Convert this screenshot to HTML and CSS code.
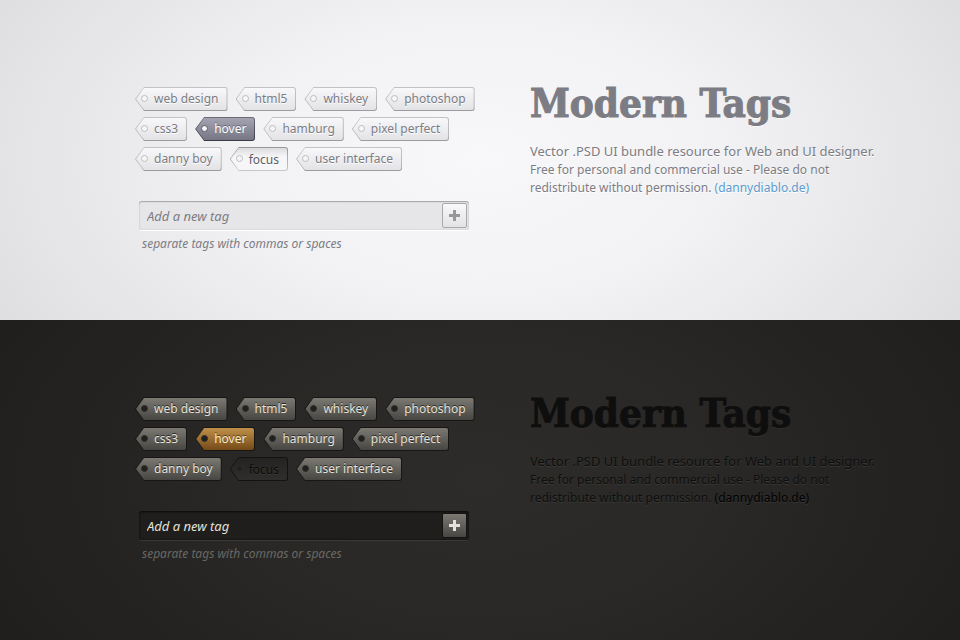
FILE: index.html
```html
<!DOCTYPE html>
<html lang="en">
<head>
    <meta charset="UTF-8">
    <title>Modern Tags</title>
    <meta name="viewport" content="width=device-width, initial-scale=1.0">
    <link rel="stylesheet" href="styles.css">
</head>
<body>
    <section class="panel light">
        <div class="widget">
            <ul class="tags">
                <li><a href="#" class="tag">web design</a></li>
                <li><a href="#" class="tag">html5</a></li>
                <li><a href="#" class="tag">whiskey</a></li>
                <li><a href="#" class="tag">photoshop</a></li>
                <li><a href="#" class="tag">css3</a></li>
                <li><a href="#" class="tag is-hover">hover</a></li>
                <li><a href="#" class="tag">hamburg</a></li>
                <li><a href="#" class="tag">pixel perfect</a></li>
                <li><a href="#" class="tag">danny boy</a></li>
                <li><a href="#" class="tag is-focus">focus</a></li>
                <li><a href="#" class="tag">user interface</a></li>
            </ul>
            <form class="add-form">
                <div class="add-box">
                    <input type="text" id="tag-light" class="add-input" placeholder="Add a new tag">
                    <button type="button" class="add-btn" aria-label="Add tag">
                        <svg width="11" height="11" viewBox="0 0 11 11"><path d="M4 0h3v4h4v3H7v4H4V7H0V4h4z"/></svg>
                    </button>
                </div>
                <label for="tag-light" class="hint">separate tags with commas or spaces</label>
            </form>
        </div>
        <div class="about">
            <h1>Modern Tags</h1>
            <p class="lead">Vector .PSD UI bundle resource for Web and UI designer.</p>
            <p>Free for personal and commercial use - Please do not<br>redistribute without permission. <a href="#">(dannydiablo.de)</a></p>
        </div>
    </section>

    <section class="panel dark">
        <div class="widget">
            <ul class="tags">
                <li><a href="#" class="tag">web design</a></li>
                <li><a href="#" class="tag">html5</a></li>
                <li><a href="#" class="tag">whiskey</a></li>
                <li><a href="#" class="tag">photoshop</a></li>
                <li><a href="#" class="tag">css3</a></li>
                <li><a href="#" class="tag is-hover">hover</a></li>
                <li><a href="#" class="tag">hamburg</a></li>
                <li><a href="#" class="tag">pixel perfect</a></li>
                <li><a href="#" class="tag">danny boy</a></li>
                <li><a href="#" class="tag is-focus">focus</a></li>
                <li><a href="#" class="tag">user interface</a></li>
            </ul>
            <form class="add-form">
                <div class="add-box">
                    <input type="text" id="tag-dark" class="add-input" placeholder="Add a new tag">
                    <button type="button" class="add-btn" aria-label="Add tag">
                        <svg width="11" height="11" viewBox="0 0 11 11"><path d="M4 0h3v4h4v3H7v4H4V7H0V4h4z"/></svg>
                    </button>
                </div>
                <label for="tag-dark" class="hint">separate tags with commas or spaces</label>
            </form>
        </div>
        <div class="about">
            <h1>Modern Tags</h1>
            <p class="lead">Vector .PSD UI bundle resource for Web and UI designer.</p>
            <p>Free for personal and commercial use - Please do not<br>redistribute without permission. <a href="#">(dannydiablo.de)</a></p>
        </div>
    </section>
</body>
</html>
```
FILE: styles.css
```css
*, *::before, *::after {
    box-sizing: border-box;
}
body {
    margin: 0;
    font-family: 'Noto Sans', 'Open Sans', sans-serif;
    font-size: 12px;
    line-height: 18px;
}

/* panels */
.panel {
    min-height: 50vh;
    display: grid;
    grid-template-columns: 360px 1fr;
    column-gap: 35px;
    align-items: start;
    padding: 87px 60px 40px 135px;
}
.light {
    --edge: linear-gradient(#c2c2c5, #b8b8bb 80%, #98989c);
    --face: linear-gradient(#f8f8fa, #e3e3e6);
    --hole: #f6f6f8;
    --hole-edge: #bcbcc0;
    --text: #7c7c84;
    --text-shadow: 0 1px 0 #fff;
    background: radial-gradient(ellipse 62% 110% at 50% 50%, #f8f8fa 0%, #f2f2f4 40%, #dcdcde 100%);
    color: #7c7c84;
}
.dark {
    --edge: #171615;
    --face: linear-gradient(#7b7972, #474642);
    --hole: #21201f;
    --hole-edge: #2f2e2c;
    --text: #e4e1d8;
    --text-shadow: 0 -1px 0 #2b2a28;
    padding-top: 77px;
    background: radial-gradient(ellipse 62% 110% at 50% 50%, #2d2c2a 0%, #292826 40%, #1e1d1c 100%);
    color: #0e0e0e;
}

/* tags */
.tags {
    list-style: none;
    margin: 0;
    padding: 0;
    display: flex;
    flex-wrap: wrap;
    gap: 6px 8px;
}
.tag {
    position: relative;
    z-index: 0;
    display: block;
    height: 24px;
    padding: 0 9px 0 19px;
    line-height: 23px;
    border-radius: 3px;
    background: var(--edge);
    clip-path: polygon(0 50%, 9px 0, 100% 0, 100% 100%, 9px 100%);
    color: var(--text);
    text-decoration: none;
    text-shadow: var(--text-shadow);
}
/* face of the tag, inside its outline */
.tag::before {
    content: '';
    position: absolute;
    z-index: -1;
    inset: 1px;
    border-radius: 2px;
    background: var(--face);
    clip-path: polygon(0 50%, 8px 0, 100% 0, 100% 100%, 8px 100%);
}
/* punched hole */
.tag::after {
    content: '';
    position: absolute;
    left: 6px;
    top: 8px;
    width: 7px;
    height: 7px;
    border: 1px solid var(--hole-edge);
    border-radius: 50%;
    background: var(--hole);
}
.light .is-hover {
    --edge: linear-gradient(#6c6c78, #3a3a46);
    --face: linear-gradient(#a4a3b2, #777684);
    --hole-edge: #5d5c6a;
    --text: #fff;
    --text-shadow: 0 -1px 0 #66657a;
}
.light .is-focus {
    --edge: linear-gradient(#97979b, #c8c8cb);
    --face: linear-gradient(#dcdcdf, #f6f6f8 40%);
    --text: #5c5c64;
    line-height: 25px;
}
.dark .is-hover {
    --face: linear-gradient(#c0904a, #744a17);
    --text: #fbeccb;
    --text-shadow: 0 -1px 0 #5e3d12;
}
.dark .is-focus {
    --face: linear-gradient(#242322, #2f2e2c);
    --edge: #131212;
    --text: #0b0b0b;
    --text-shadow: 0 1px 0 #3a3936;
    line-height: 25px;
}

/* add field */
.add-form {
    width: 330px;
    margin: 30px 0 0 4px;
}
.add-box {
    display: flex;
    align-items: center;
    height: 29px;
    padding-right: 2px;
    border-radius: 3px;
}
.add-input {
    flex: 1;
    min-width: 0;
    height: 100%;
    padding: 0 8px;
    border: 0;
    outline: none;
    background: none;
    color: inherit;
    font: italic 13px 'Noto Sans', 'Open Sans', sans-serif;
}
.add-input::placeholder {
    color: inherit;
    opacity: 1;
}
.add-btn {
    display: flex;
    align-items: center;
    justify-content: center;
    width: 25px;
    height: 25px;
    padding: 0;
    border: 1px solid #a9a9ad;
    border-radius: 2px;
    background: var(--face);
    cursor: pointer;
}
.hint {
    display: block;
    margin: 5px 0 0 3px;
    font-style: italic;
}
.light .add-box {
    background: #e6e6e8;
    box-shadow: inset 0 1px 1px #a5a5a9, inset 0 0 2px #c0c0c4, 0 1px 0 #fff;
}
.light .add-btn {
    fill: #97979b;
}
.dark .add-box {
    background: #1f1e1d;
    box-shadow: inset 0 1px 2px #0d0d0d, inset 0 0 2px #121212, 0 1px 0 #3a3937;
    color: #e4e1d8;
}
.dark .add-btn {
    border-color: #151413;
    fill: #e4e1d8;
}
.dark .hint {
    color: #6a6965;
}

/* right column */
.about h1 {
    margin: -12px 0 0;
    font-family: 'DejaVu Serif Condensed', 'DejaVu Serif', serif;
    font-stretch: condensed;
    font-size: 40px;
    font-weight: bold;
    line-height: 56px;
    white-space: nowrap;
    -webkit-text-stroke: 1px;
}
.about p {
    margin: 0;
    white-space: nowrap;
}
.about .lead {
    margin: 11px 0 1px;
    font-size: 13px;
}
.about a {
    color: #5b9bcf;
    text-decoration: none;
}
.light .about {
    text-shadow: 0 1px 0 #fff;
}
.dark .about {
    text-shadow: 0 1px 0 #393836;
}
.dark .about a {
    color: #000;
}

@media (max-width: 800px) {
    .panel {
        grid-template-columns: 1fr;
        row-gap: 40px;
        padding: 40px 20px;
    }
    .about p {
        white-space: normal;
    }
}
```
